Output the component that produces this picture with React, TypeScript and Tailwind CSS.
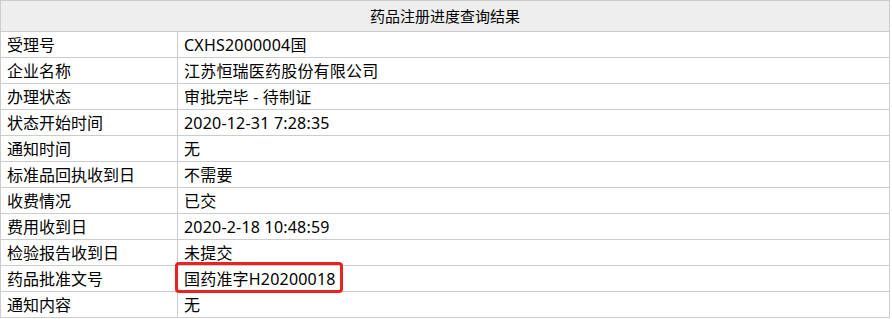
import React from "react";

const rows: [string, string][] = [
  ["受理号", "CXHS2000004国"],
  ["企业名称", "江苏恒瑞医药股份有限公司"],
  ["办理状态", "审批完毕 - 待制证"],
  ["状态开始时间", "2020-12-31 7:28:35"],
  ["通知时间", "无"],
  ["标准品回执收到日", "不需要"],
  ["收费情况", "已交"],
  ["费用收到日", "2020-2-18 10:48:59"],
  ["检验报告收到日", "未提交"],
  ["药品批准文号", "国药准字H20200018"],
  ["通知内容", "无"],
];

export default function App() {
  return (
    <div
      className="w-[892px] h-[319px] bg-white text-[16px] text-black"
      style={{ fontFamily: '"Noto Sans", "Noto Sans CJK SC", sans-serif' }}
    >
      <table className="w-[890px] border-collapse">
        <tbody>
          <tr>
            <td
              colSpan={2}
              className="h-[31px] border border-[#cccccc] bg-[#eeeeee] text-center p-0 leading-none text-[15px]"
            >
              药品注册进度查询结果
            </td>
          </tr>
          {rows.map(([k, v], i) => (
            <tr key={i}>
              <td className="w-[177px] h-[26px] border border-[#cccccc] p-0 pl-[6px] leading-none align-middle">
                {k}
              </td>
              <td className="h-[26px] border border-[#cccccc] p-0 align-middle">
                <div className="relative h-[25px] flex items-center pl-[6px] leading-none tracking-[0.2px]">
                  {v}
                  {k === "药品批准文号" && (
                    <div className="absolute left-[-3px] top-[-4px] w-[168px] h-[31px] border-[3px] border-[#ea2320] rounded-[4px]" />
                  )}
                </div>
              </td>
            </tr>
          ))}
        </tbody>
      </table>
    </div>
  );
}
